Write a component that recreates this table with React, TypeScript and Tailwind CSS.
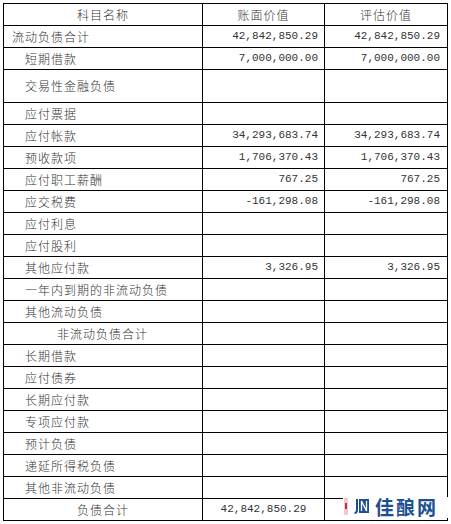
import React from "react";

type Row = {
  name: string;
  indent?: "top" | "sub" | "mid" | "center";
  book?: string;
  appraised?: string;
  tall?: boolean;
  centerNum?: boolean;
};

const rows: Row[] = [
  { name: "流动负债合计", indent: "top", book: "42,842,850.29", appraised: "42,842,850.29" },
  { name: "短期借款", book: "7,000,000.00", appraised: "7,000,000.00" },
  { name: "交易性金融负债", tall: true },
  { name: "应付票据" },
  { name: "应付帐款", book: "34,293,683.74", appraised: "34,293,683.74" },
  { name: "预收款项", book: "1,706,370.43", appraised: "1,706,370.43" },
  { name: "应付职工薪酬", book: "767.25", appraised: "767.25" },
  { name: "应交税费", book: "-161,298.08", appraised: "-161,298.08" },
  { name: "应付利息" },
  { name: "应付股利" },
  { name: "其他应付款", book: "3,326.95", appraised: "3,326.95" },
  { name: "一年内到期的非流动负债" },
  { name: "其他流动负债" },
  { name: "非流动负债合计", indent: "mid" },
  { name: "长期借款" },
  { name: "应付债券" },
  { name: "长期应付款" },
  { name: "专项应付款" },
  { name: "预计负债" },
  { name: "递延所得税负债" },
  { name: "其他非流动负债" },
  { name: "负债合计", indent: "center", book: "42,842,850.29", centerNum: true },
];

const cjk = "font-['SimSun','Noto_Sans_CJK_SC',sans-serif] font-light text-[12px] tracking-[1px]";
const num = "font-['Liberation_Mono','Noto_Sans_CJK_SC',monospace] text-[11px]";

function nameClass(indent?: Row["indent"]) {
  if (indent === "top") return "pl-[8px]";
  if (indent === "mid") return "pl-[53px]";
  if (indent === "center") return "justify-center";
  return "pl-[21px]";
}

function Logo() {
  return (
    <div className="absolute left-[343px] top-[497px] w-[108px] h-[21px] bg-white flex items-center">
      <div className="w-[4px] h-[17px] bg-[#f3c9cc] ml-[1px] -mt-[3px] flex items-center justify-center">
        <div className="w-[2px] h-[6px] bg-[#b23a48]" />
      </div>
      <svg width="16" height="16" viewBox="0 0 16 16" className="ml-[6px] -mt-[3px]">
        <path d="M3 1 V12 Q3 15 0.5 15" fill="none" stroke="#1d4f91" strokeWidth="2" />
        <rect x="5" y="1" width="10" height="14" fill="#1d4f91" />
        <path d="M7.5 13 V3 L12.5 13 V3" fill="none" stroke="#ffffff" strokeWidth="1.3" />
      </svg>
      <span className="ml-[5px] -mt-[3px] font-['Noto_Sans_CJK_SC',sans-serif] font-bold text-[19px] leading-none text-[#1d4f91] tracking-[2px]">
        佳酿网
      </span>
    </div>
  );
}

export default function App() {
  return (
    <div className="relative w-[451px] h-[524px] bg-white text-[#333333] overflow-hidden">
      <div className="ml-[3px] mt-[3px] w-[445px] border-l border-t border-black">
        {/* header */}
        <div className="grid grid-cols-[199px_122px_123px] h-[22px]">
          <div className={`flex items-center justify-center border-r border-b border-black ${cjk}`}>科目名称</div>
          <div className={`flex items-center justify-center border-r border-b border-black ${cjk}`}>账面价值</div>
          <div className={`flex items-center justify-center border-r border-b border-black ${cjk}`}>评估价值</div>
        </div>
        {rows.map((r) => (
          <div key={r.name} className={`grid grid-cols-[199px_122px_123px] ${r.tall ? "h-[33px]" : "h-[22px]"}`}>
            <div className={`flex items-center border-r border-b border-black ${cjk} ${nameClass(r.indent)}`}>
              {r.name}
            </div>
            <div
              className={`flex items-center border-r border-b border-black ${num} ${
                r.centerNum ? "justify-center" : "justify-end pr-[6px]"
              }`}
            >
              {r.book}
            </div>
            <div className={`flex items-center justify-end pr-[7px] border-r border-b border-black ${num}`}>
              {r.appraised}
            </div>
          </div>
        ))}
      </div>
      <Logo />
    </div>
  );
}
